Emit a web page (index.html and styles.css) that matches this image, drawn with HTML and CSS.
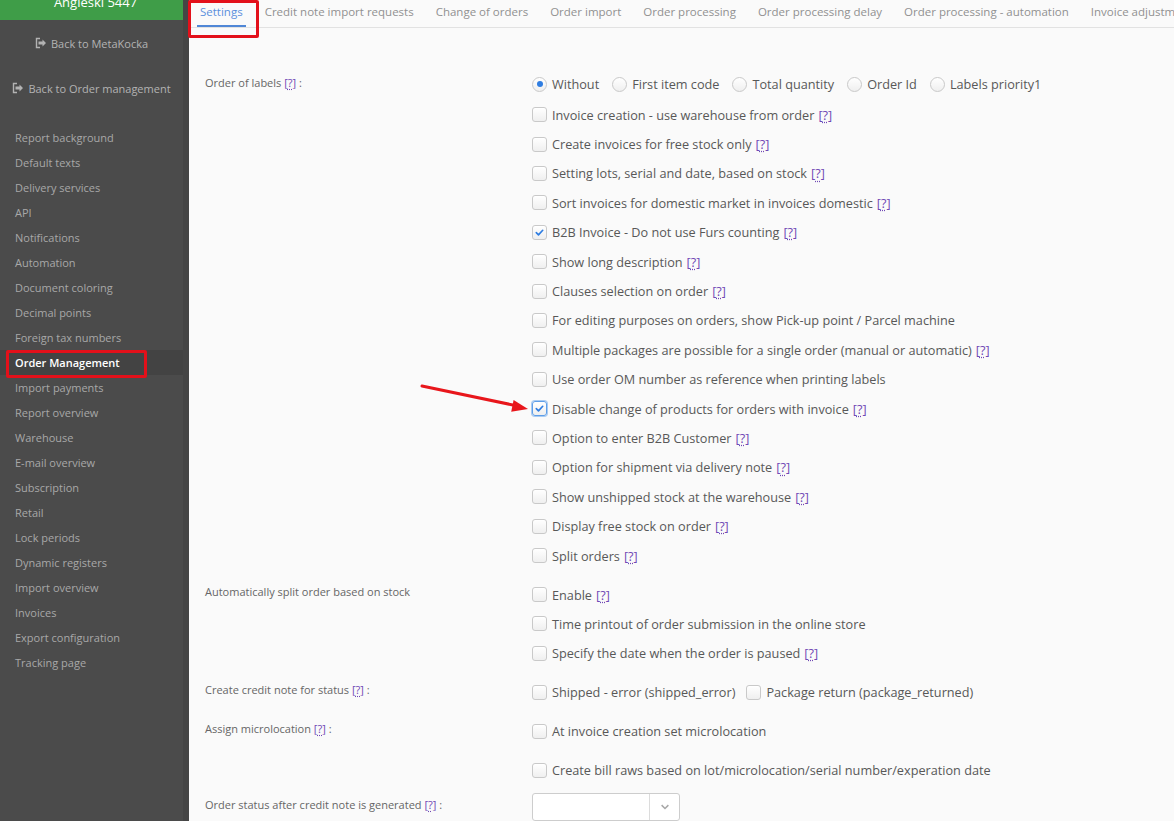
FILE: index.html
```html
<!DOCTYPE html>
<html lang="en">
<head>
<meta charset="utf-8">
<title>Order Management settings</title>
<link rel="stylesheet" href="styles.css">
</head>
<body>
<div class="app">
  <aside class="sidebar">
    <div class="brand"><span>Angleski 5447</span></div>
    <a class="back back-mk" href="#">
      <svg class="exit" viewBox="0 0 12 12" width="12" height="12"><path d="M5 1.5H1.5v9H5" fill="none" stroke="currentColor" stroke-width="1.4"/><path d="M3.5 4.5h4V2.5L11 6l-3.5 3.5v-2h-4z" fill="currentColor"/></svg>
      <span>Back to MetaKocka</span>
    </a>
    <a class="back back-om" href="#">
      <svg class="exit" viewBox="0 0 12 12" width="12" height="12"><path d="M5 1.5H1.5v9H5" fill="none" stroke="currentColor" stroke-width="1.4"/><path d="M3.5 4.5h4V2.5L11 6l-3.5 3.5v-2h-4z" fill="currentColor"/></svg>
      <span>Back to Order management</span>
    </a>
    <nav class="menu">
      <a href="#">Report background</a>
      <a href="#">Default texts</a>
      <a href="#">Delivery services</a>
      <a href="#">API</a>
      <a href="#">Notifications</a>
      <a href="#">Automation</a>
      <a href="#">Document coloring</a>
      <a href="#">Decimal points</a>
      <a href="#">Foreign tax numbers</a>
      <a href="#" class="active">Order Management</a>
      <a href="#">Import payments</a>
      <a href="#">Report overview</a>
      <a href="#">Warehouse</a>
      <a href="#">E-mail overview</a>
      <a href="#">Subscription</a>
      <a href="#">Retail</a>
      <a href="#">Lock periods</a>
      <a href="#">Dynamic registers</a>
      <a href="#">Import overview</a>
      <a href="#">Invoices</a>
      <a href="#">Export configuration</a>
      <a href="#">Tracking page</a>
    </nav>
  </aside>

  <main class="main">
    <ul class="tabs">
      <li class="active">Settings</li>
      <li>Credit note import requests</li>
      <li>Change of orders</li>
      <li>Order import</li>
      <li>Order processing</li>
      <li>Order processing delay</li>
      <li>Order processing - automation</li>
      <li>Invoice adjustments</li>
    </ul>

    <div class="form">
      <div class="row">
        <div class="label label-first">Order of labels <span class="help">[<u>?</u>]</span> :</div>
        <div class="controls">
          <div class="opt opt-radio">
            <label class="inline"><span class="rb on"></span>Without</label>
            <label class="inline"><span class="rb"></span>First item code</label>
            <label class="inline"><span class="rb"></span>Total quantity</label>
            <label class="inline"><span class="rb"></span>Order Id</label>
            <label class="inline"><span class="rb"></span>Labels priority1</label>
          </div>
          <div class="opt"><span class="cb"></span>Invoice creation - use warehouse from order <span class="help">[<u>?</u>]</span></div>
          <div class="opt"><span class="cb"></span>Create invoices for free stock only <span class="help">[<u>?</u>]</span></div>
          <div class="opt"><span class="cb"></span>Setting lots, serial and date, based on stock <span class="help">[<u>?</u>]</span></div>
          <div class="opt"><span class="cb"></span>Sort invoices for domestic market in invoices domestic <span class="help">[<u>?</u>]</span></div>
          <div class="opt"><span class="cb on"><svg viewBox="0 0 12 12" width="11" height="11"><path d="M2.5 6.2l2.4 2.4 4.6-5" fill="none" stroke="#2f7de1" stroke-width="1.8" stroke-linecap="round" stroke-linejoin="round"/></svg></span>B2B Invoice - Do not use Furs counting <span class="help">[<u>?</u>]</span></div>
          <div class="opt"><span class="cb"></span>Show long description <span class="help">[<u>?</u>]</span></div>
          <div class="opt"><span class="cb"></span>Clauses selection on order <span class="help">[<u>?</u>]</span></div>
          <div class="opt"><span class="cb"></span>For editing purposes on orders, show Pick-up point / Parcel machine</div>
          <div class="opt"><span class="cb"></span>Multiple packages are possible for a single order (manual or automatic) <span class="help">[<u>?</u>]</span></div>
          <div class="opt"><span class="cb"></span>Use order OM number as reference when printing labels</div>
          <div class="opt"><span class="cb on focus"><svg viewBox="0 0 12 12" width="11" height="11"><path d="M2.5 6.2l2.4 2.4 4.6-5" fill="none" stroke="#2f7de1" stroke-width="1.8" stroke-linecap="round" stroke-linejoin="round"/></svg></span>Disable change of products for orders with invoice <span class="help">[<u>?</u>]</span></div>
          <div class="opt"><span class="cb"></span>Option to enter B2B Customer <span class="help">[<u>?</u>]</span></div>
          <div class="opt"><span class="cb"></span>Option for shipment via delivery note <span class="help">[<u>?</u>]</span></div>
          <div class="opt"><span class="cb"></span>Show unshipped stock at the warehouse <span class="help">[<u>?</u>]</span></div>
          <div class="opt"><span class="cb"></span>Display free stock on order <span class="help">[<u>?</u>]</span></div>
          <div class="opt"><span class="cb"></span>Split orders <span class="help">[<u>?</u>]</span></div>
        </div>
      </div>

      <div class="row">
        <div class="label">Automatically split order based on stock</div>
        <div class="controls">
          <div class="opt"><span class="cb"></span>Enable <span class="help">[<u>?</u>]</span></div>
          <div class="opt"><span class="cb"></span>Time printout of order submission in the online store</div>
          <div class="opt"><span class="cb"></span>Specify the date when the order is paused <span class="help">[<u>?</u>]</span></div>
        </div>
      </div>

      <div class="row">
        <div class="label">Create credit note for status <span class="help">[<u>?</u>]</span> :</div>
        <div class="controls">
          <div class="opt">
            <label class="inline wide"><span class="cb"></span>Shipped - error (shipped_error)</label>
            <label class="inline"><span class="cb"></span>Package return (package_returned)</label>
          </div>
        </div>
      </div>

      <div class="row">
        <div class="label">Assign microlocation <span class="help">[<u>?</u>]</span> :</div>
        <div class="controls">
          <div class="opt"><span class="cb"></span>At invoice creation set microlocation</div>
        </div>
      </div>

      <div class="row">
        <div class="label"></div>
        <div class="controls">
          <div class="opt"><span class="cb"></span>Create bill raws based on lot/microlocation/serial number/experation date</div>
        </div>
      </div>

      <div class="row row-select">
        <div class="label">Order status after credit note is generated <span class="help">[<u>?</u>]</span> :</div>
        <div class="controls">
          <div class="select">
            <span class="select-value"></span>
            <span class="select-arrow"><svg viewBox="0 0 12 8" width="10" height="6"><path d="M1.5 1.5L6 6l4.5-4.5" fill="none" stroke="#a8a8a8" stroke-width="2"/></svg></span>
          </div>
        </div>
      </div>
    </div>
  </main>
</div>

<div class="mark mark-tab"></div>
<div class="mark mark-menu"></div>
<svg class="arrow" width="1174" height="821" viewBox="0 0 1174 821">
  <line x1="422" y1="386" x2="514" y2="405.2" stroke="#e8161b" stroke-width="3" stroke-linecap="round"/>
  <polygon points="528,409 511.2,411.8 513.6,399.9" fill="#e8161b"/>
</svg>
</body>
</html>
```

FILE: styles.css
```css
* { box-sizing: border-box; }

html, body {
  margin: 0;
  padding: 0;
  height: 100%;
}

body {
  font-family: "Open Sans", "Noto Sans", "Liberation Sans", sans-serif;
  background: #fafafa;
  color: #555;
  overflow: hidden;
}

.app {
  display: flex;
  height: 821px;
}

/* ---------- sidebar ---------- */
.sidebar {
  width: 189px;
  flex: 0 0 189px;
  background: #4b4b4b;
  border-right: 6px solid #454545;
  display: flex;
  flex-direction: column;
}

.brand {
  height: 20px;
  background: #3f9d48;
  overflow: hidden;
  text-align: center;
  color: #fff;
  font-size: 13px;
  padding-left: 8px;
}

.brand span {
  display: block;
  line-height: 18px;
  margin-top: -7px;
}

.back {
  display: flex;
  justify-content: center;
  align-items: center;
  height: 16px;
  color: #b3b3b3;
  font-size: 11px;
  text-decoration: none;
  white-space: nowrap;
}

.back .exit {
  margin-right: 4px;
  flex: 0 0 auto;
}

.back-mk { margin-top: 15px; }
.back-om { margin-top: 29px; }

.menu {
  display: flex;
  flex-direction: column;
  margin-top: 28.5px;
}

.menu a {
  height: 25px;
  line-height: 25px;
  padding-left: 15px;
  font-size: 11px;
  color: #a8a8a8;
  text-decoration: none;
  white-space: nowrap;
}

.menu a.active {
  background: #434343;
  color: #fff;
  font-weight: 600;
}

/* ---------- main ---------- */
.main {
  flex: 1 1 auto;
  min-width: 0;
  overflow: hidden;
  background: #fafafa;
}

.tabs {
  list-style: none;
  margin: 0;
  padding: 0 0 0 8px;
  display: flex;
  white-space: nowrap;
  border-bottom: 1px solid #e2e2e2;
  height: 28px;
}

.tabs li {
  flex: 0 0 auto;
  padding: 4px 3px 0;
  margin-right: 16px;
  height: 27px;
  font-size: 11.5px;
  line-height: 16px;
  color: #919191;
}

.tabs li.active {
  color: #5a90dd;
  border-bottom: 2px solid #5087d6;
}

.form {
  padding: 40px 0 0 16px;
}

.row {
  display: grid;
  grid-template-columns: 327px 1fr;
  margin-bottom: 9.6px;
}

.label {
  font-size: 11px;
  line-height: 15px;
  padding-top: 4px;
  color: #666;
  white-space: nowrap;
}

.label.label-first {
  padding-top: 7px;
}

.row-select .label {
  padding-top: 2px;
}

.controls {
  display: flex;
  flex-direction: column;
}

.opt {
  display: flex;
  align-items: center;
  height: 29.4px;
  font-size: 12.7px;
  color: #585858;
  white-space: nowrap;
}

.opt-radio {
  height: 32px;
}

.inline {
  display: flex;
  align-items: center;
  margin-right: 13px;
}

.inline.wide {
  margin-right: 11px;
}

.help {
  color: #7048b5;
}

.opt .help {
  margin-left: 4px;
}

.help u {
  text-decoration: underline dotted;
  text-underline-offset: 2px;
}

/* checkbox */
.cb {
  width: 15px;
  height: 15px;
  flex: 0 0 15px;
  border: 1px solid #c9c9c9;
  border-radius: 3px;
  background: linear-gradient(#ffffff, #efefef);
  box-shadow: inset 0 1px 0 #fff;
  margin-right: 5px;
  display: flex;
  align-items: center;
  justify-content: center;
}

.cb.focus {
  border-color: #5e9ee8;
  box-shadow: 0 0 0 1px #a9cbf2;
}

/* radio */
.rb {
  width: 15px;
  height: 15px;
  flex: 0 0 15px;
  border: 1px solid #c9c9c9;
  border-radius: 50%;
  background: linear-gradient(#ffffff, #efefef);
  margin-right: 5px;
  display: flex;
  align-items: center;
  justify-content: center;
}

.rb.on::after {
  content: "";
  width: 6px;
  height: 6px;
  border-radius: 50%;
  background: #2f7de1;
}

/* select */
.select {
  margin-top: -2px;
  width: 148px;
  height: 28px;
  border: 1px solid #cdcdcd;
  border-radius: 3px;
  background: #fff;
  display: flex;
}

.select-value {
  flex: 1 1 auto;
}

.select-arrow {
  width: 30px;
  border-left: 1px solid #dcdcdc;
  display: flex;
  align-items: center;
  justify-content: center;
}

/* ---------- annotations ---------- */
.mark {
  position: absolute;
  border: 3px solid #e3101a;
  border-radius: 2px;
  pointer-events: none;
}

.mark-tab {
  left: 188px;
  top: 0;
  width: 71px;
  height: 38px;
}

.mark-menu {
  left: 6px;
  top: 350px;
  width: 141px;
  height: 28px;
}

.arrow {
  position: absolute;
  left: 0;
  top: 0;
  pointer-events: none;
}
```
